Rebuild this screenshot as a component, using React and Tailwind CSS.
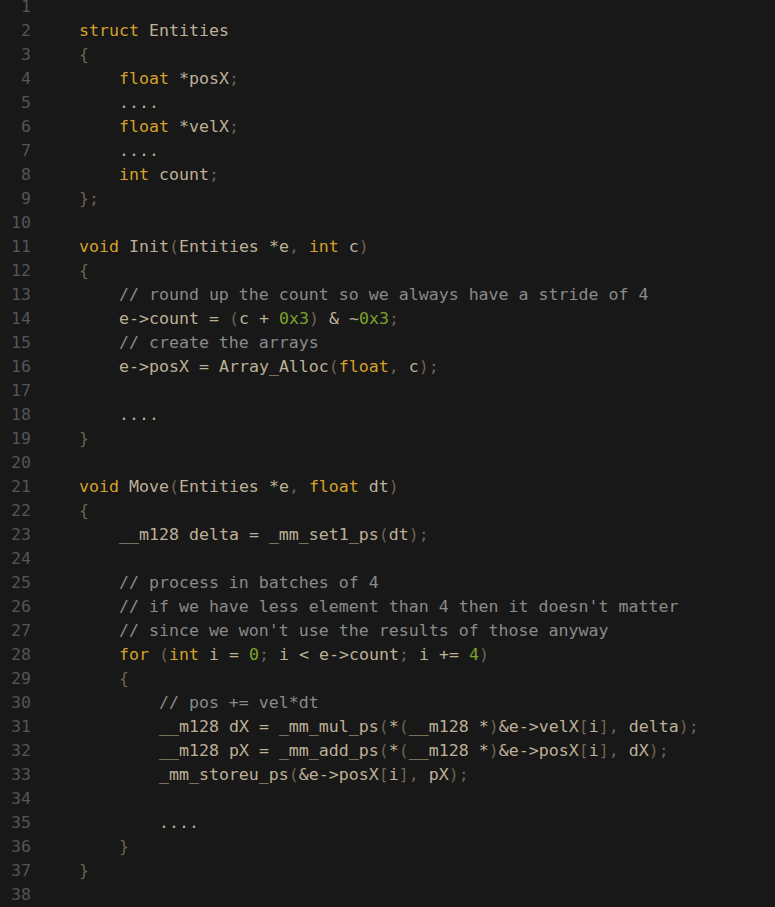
import React from 'react'

const code = [
  '',
  'struct Entities',
  '{',
  '    float *posX;',
  '    ....',
  '    float *velX;',
  '    ....',
  '    int count;',
  '};',
  '',
  'void Init(Entities *e, int c)',
  '{',
  '    // round up the count so we always have a stride of 4',
  '    e->count = (c + 0x3) & ~0x3;',
  '    // create the arrays',
  '    e->posX = Array_Alloc(float, c);',
  '',
  '    ....',
  '}',
  '',
  'void Move(Entities *e, float dt)',
  '{',
  '    __m128 delta = _mm_set1_ps(dt);',
  '',
  '    // process in batches of 4',
  "    // if we have less element than 4 then it doesn't matter",
  "    // since we won't use the results of those anyway",
  '    for (int i = 0; i < e->count; i += 4)',
  '    {',
  '        // pos += vel*dt',
  '        __m128 dX = _mm_mul_ps(*(__m128 *)&e->velX[i], delta);',
  '        __m128 pX = _mm_add_ps(*(__m128 *)&e->posX[i], dX);',
  '        _mm_storeu_ps(&e->posX[i], pX);',
  '',
  '        ....',
  '    }',
  '}',
  '',
]

const keywords = new Set(['struct', 'float', 'int', 'void', 'for'])

// tiny C highlighter, just enough for this snippet
const tokenize = (line) => {
  const out = []
  const re = /(\/\/.*$)|([A-Za-z_][A-Za-z0-9_]*)|(0x[0-9a-fA-F]+|\d+)|([{}()[\];,])|(\s+)|(.)/g
  let m
  while ((m = re.exec(line))) {
    if (m[1]) out.push(['comment', m[1]])
    else if (m[2]) out.push([keywords.has(m[2]) ? 'kw' : 'id', m[2]])
    else if (m[3]) out.push(['num', m[3]])
    else if (m[4]) out.push(['punc', m[4]])
    else if (m[5]) out.push(['ws', m[5]])
    else out.push(['id', m[6]])
  }
  return out
}

const colors = {
  comment: 'text-[#8a8a8a]',
  kw: 'text-[#d4a12a]',
  id: 'text-[#bdb096]',
  num: 'text-[#7da428]',
  punc: 'text-[#6e6350]',
  ws: '',
}

const Line = ({n, text}) => (
  <div className="flex h-[24px] items-center">
    <span className="w-[31px] shrink-0 text-right text-[#555555]">{n}</span>
    <span className="pl-[48px] whitespace-pre">
      {tokenize(text).map(([type, t], i) => (
        <span key={i} className={colors[type]}>{t}</span>
      ))}
    </span>
  </div>
)

export default function App() {
  return (
    <div
      className="w-[775px] h-[907px] overflow-hidden bg-[#181818] text-[16.6px] leading-[24px]"
      style={{fontFamily: '"DejaVu Sans Mono", "Liberation Mono", monospace'}}
    >
      <div className="-mt-[5px]">
        {code.map((text, i) => (
          <Line key={i} n={i + 1} text={text} />
        ))}
      </div>
    </div>
  )
}
